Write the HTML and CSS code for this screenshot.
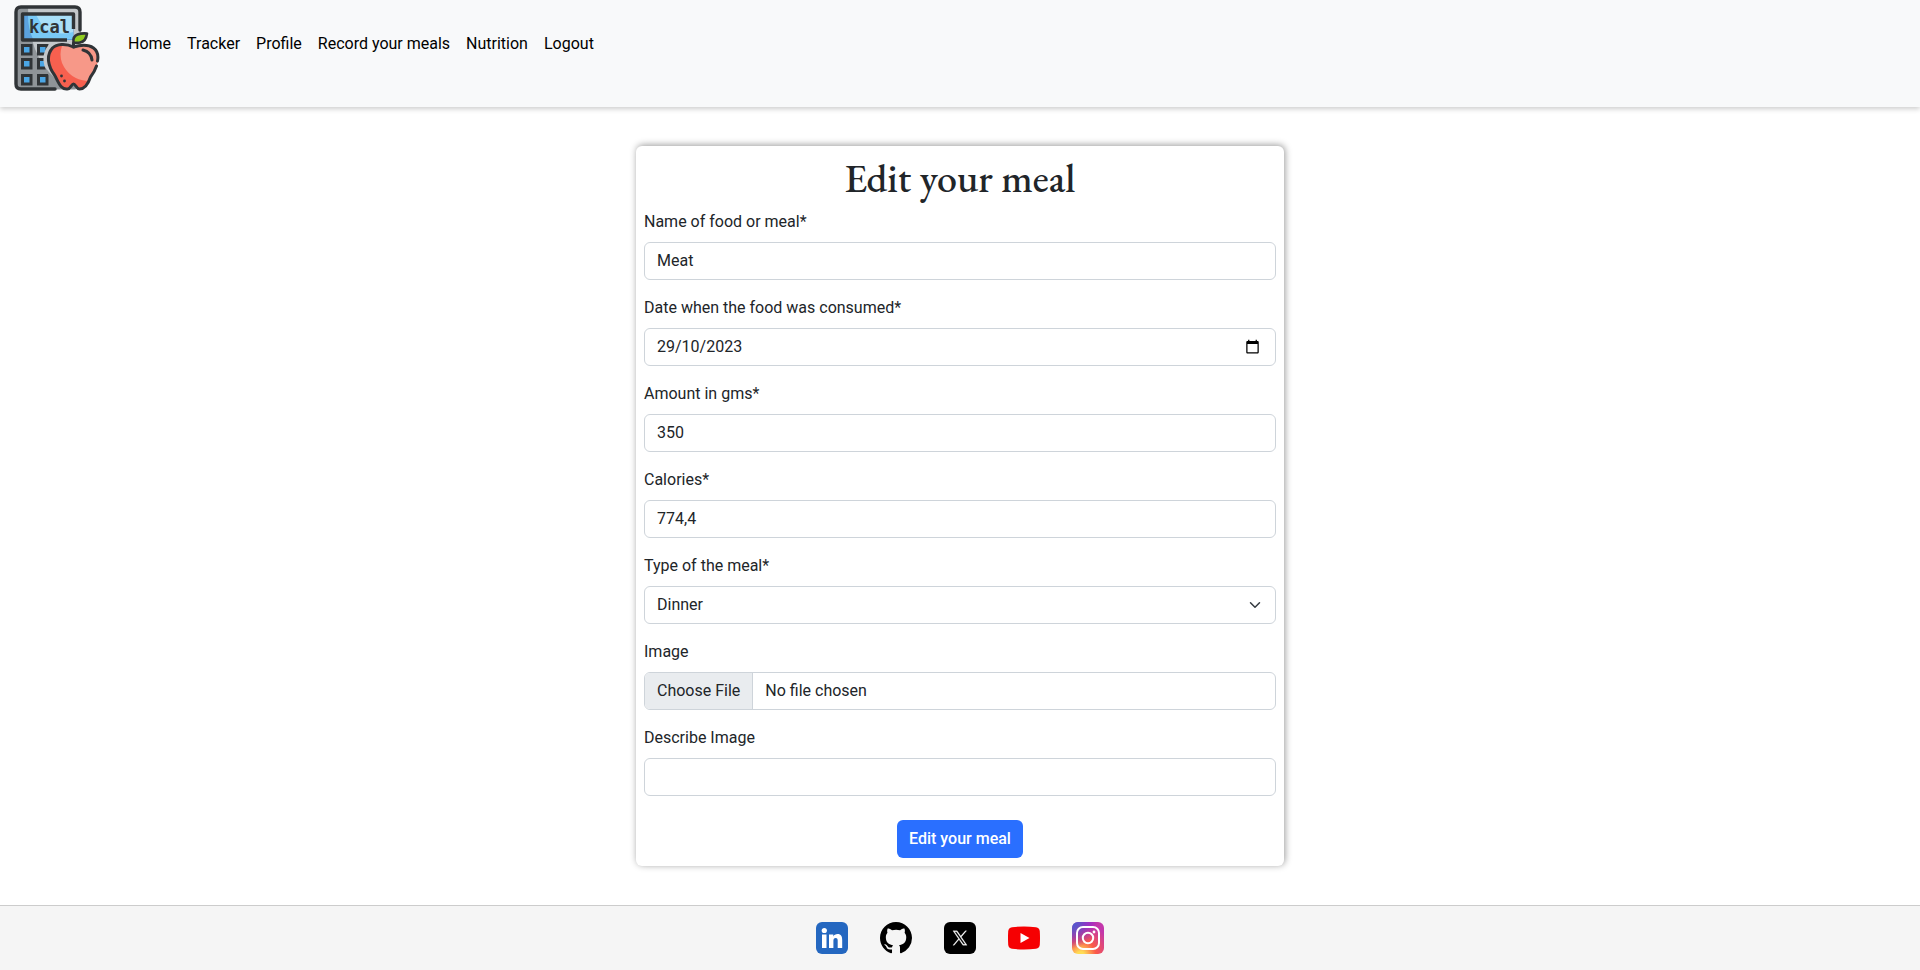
FILE: index.html
```html
<!DOCTYPE html>
<html lang="en">
<head>
<meta charset="utf-8">
<meta name="viewport" content="width=device-width, initial-scale=1">
<title>Edit your meal</title>
<link rel="stylesheet" href="styles.css">
</head>
<body>
<header class="navbar">
  <a class="brand" href="#" aria-label="kcal home">
    <svg class="logo" viewBox="0 0 86 86" fill="none" stroke-linecap="round" stroke-linejoin="round">
      <defs>
        <path id="apple" d="M59 42c-8-5-17-3-21 1-7 8-4 19 2 27 4 7 6 15 13 14 3 0 4-5 6-5s3 5 6 5c6 0 9-6 11-12 6-9 13-20 4-29-6-5-14-4-21-1Z"/>
        <mask id="around-apple" maskUnits="userSpaceOnUse" x="0" y="0" width="86" height="86">
          <path d="M0 0h86v86H0z" fill="#fff"/>
          <use href="#apple" fill="#000" stroke="#000" stroke-width="9"/>
        </mask>
      </defs>
      <rect x="1.500" y="1.500" width="65" height="83" rx="6" fill="#8f9498"/>
      <path d="M14 2h47q5 0 5 5v40L42 74Q14 50 14 2Z" fill="#c3c7ca"/>
      <path d="M66 25V7q0-5-5-5H7Q2 2 2 7v72q0 5 5 5h34" stroke="#303437" stroke-width="3.400"/>
      <rect x="8.500" y="9" width="51" height="26" fill="#5ba2df"/>
      <path d="M14 10h45v24H19q-5-10-5-24Z" fill="#79c9f6"/>
      <path d="M22 10h37v17Q46 31 31 25Z" fill="#a9dff8"/>
      <path d="M59.500 24V9H8.500v26H53" stroke="#303437" stroke-width="3.400" stroke-linecap="butt"/>
      <text class="logo-text" x="15" y="28">kcal</text>
      <g fill="#4ba6e5" stroke="#303437" stroke-width="3" stroke-linejoin="miter" mask="url(#around-apple)">
        <rect x="8.500" y="40.500" width="8.500" height="8.500"/><rect x="24.500" y="40.500" width="8.500" height="8.500"/>
        <rect x="8.500" y="54.500" width="8.500" height="8.500"/><rect x="24.500" y="54.500" width="8.500" height="8.500"/>
        <rect x="8.500" y="70.500" width="8.500" height="8.500"/><rect x="24.500" y="70.500" width="8.500" height="8.500"/>
      </g>
      <use href="#apple" fill="#f7604f"/>
      <path d="M59 42c7-3 15-4 21 1 8 8 2 19-4 29l-3 4Q55 74 48 58q-3-9 0-17 6-1 11 1Z" fill="#f79888"/>
      <path d="M83.500 56c1-5 0-10-4-13-6-4-13-3-20-1-8-4-17-3-21 1-7 8-4 19 2 27 4 7 6 15 13 14 3 0 4-5 6-5s3 5 6 5c6 0 9-6 11-12q4-5 6-11" stroke="#303437" stroke-width="3"/>
      <path d="M69 45q8 2 9 10" stroke="#303437" stroke-width="3"/>
      <path d="M59.500 42v-4" stroke="#303437" stroke-width="3"/>
      <path d="M59.500 37.500q-1-6 4-8 4-1.500 9.500-1-1 8-7 9-3 .5-6.500 0Z" fill="#91ce20" stroke="#303437" stroke-width="2.600"/>
      <circle cx="47.500" cy="71" r="1.400" fill="#303437"/><circle cx="50.500" cy="76" r="1.400" fill="#303437"/>
    </svg>
  </a>
  <nav class="nav-links" aria-label="Main">
    <a href="#">Home</a>
    <a href="#">Tracker</a>
    <a href="#">Profile</a>
    <a href="#">Record your meals</a>
    <a href="#">Nutrition</a>
    <a href="#">Logout</a>
  </nav>
</header>

<main class="container">
  <form class="card">
    <h1 class="title">Edit your meal</h1>
    <div class="field">
      <label for="name">Name of food or meal*</label>
      <input class="control" id="name" type="text" value="Meat" required>
    </div>
    <div class="field">
      <label for="date">Date when the food was consumed*</label>
      <div class="control-wrap">
        <input class="control" id="date" type="text" inputmode="numeric" value="29/10/2023" required>
        <svg class="control-icon" viewBox="0 0 24 24" fill="#000"><path d="M20 3h-1V1h-2v2H7V1H5v2H4c-1.100 0-2 .9-2 2v16c0 1.100.9 2 2 2h16c1.100 0 2-.9 2-2V5c0-1.100-.9-2-2-2zm0 18H4V8h16v13z"/></svg>
      </div>
    </div>
    <div class="field">
      <label for="amount">Amount in gms*</label>
      <input class="control" id="amount" type="text" inputmode="numeric" value="350" required>
    </div>
    <div class="field">
      <label for="calories">Calories*</label>
      <input class="control" id="calories" type="text" inputmode="decimal" value="774,4" required>
    </div>
    <div class="field">
      <label for="type">Type of the meal*</label>
      <div class="control-wrap">
        <select class="control" id="type"><option>Dinner</option></select>
        <svg class="control-icon chevron" viewBox="0 0 16 16" fill="none" stroke="#343a40" stroke-width="2" stroke-linecap="round" stroke-linejoin="round"><path d="m2 5 6 6 6-6"/></svg>
      </div>
    </div>
    <div class="field">
      <label for="image">Image</label>
      <input class="control file" id="image" type="file">
    </div>
    <div class="field">
      <label for="describe">Describe Image</label>
      <input class="control" id="describe" type="text">
    </div>
    <button class="submit" type="submit">Edit your meal</button>
  </form>
</main>

<footer class="footer">
  <a href="#" aria-label="LinkedIn">
    <svg viewBox="0 0 32 32"><rect width="32" height="32" rx="6" fill="#2467c0"/><g fill="#fff"><circle cx="8.300" cy="8.500" r="2.600"/><path d="M6 12.500h4.500V26H6zM13 12.500h4.300v1.900c.8-1.400 2.300-2.300 4.200-2.300 3.700 0 4.700 2.400 4.700 5.900v8h-4.500v-7.200c0-1.700-.4-2.900-2-2.900-1.700 0-2.300 1.200-2.300 2.900V26H13z"/></g></svg>
  </a>
  <a href="#" aria-label="GitHub">
    <svg viewBox="0 0 16 16"><path d="M8 0C3.580 0 0 3.580 0 8c0 3.540 2.290 6.530 5.470 7.590.4.070.55-.17.55-.38 0-.19-.01-.82-.01-1.490-2.010.37-2.530-.49-2.690-.94-.09-.23-.48-.94-.82-1.130-.28-.15-.68-.52-.01-.53.63-.01 1.080.58 1.230.82.720 1.210 1.870.87 2.330.66.070-.52.280-.87.510-1.070-1.780-.2-3.640-.89-3.640-3.950 0-.87.310-1.590.82-2.150-.08-.2-.36-1.020.08-2.120 0 0 .67-.21 2.200.82.640-.18 1.320-.27 2-.27s1.360.09 2 .27c1.530-1.040 2.200-.82 2.200-.82.440 1.100.16 1.920.08 2.120.51.560.82 1.270.82 2.150 0 3.070-1.870 3.750-3.650 3.950.29.250.54.730.54 1.480 0 1.070-.01 1.930-.01 2.200 0 .21.150.46.550.38A8.010 8.010 0 0 0 16 8c0-4.420-3.580-8-8-8z"/></svg>
  </a>
  <a href="#" aria-label="X">
    <svg viewBox="0 0 32 32"><rect width="32" height="32" rx="6"/><path transform="translate(8.800 8.800) scale(.6)" fill="#fff" stroke="#fff" stroke-width=".5" d="M14.234 10.162 22.977 0h-2.072l-7.591 8.824L7.251 0H.258l9.168 13.343L.258 24H2.330l8.016-9.318L16.749 24h6.993zm-2.837 3.299-.929-1.329L3.076 1.560h3.182l5.965 8.532.929 1.329 7.754 11.090h-3.182z"/></svg>
  </a>
  <a href="#" aria-label="YouTube">
    <svg viewBox="0 0 32 32"><path fill="#f60002" d="M4 5.200Q16 4 28 5.200q3.500.5 3.800 4 .4 7 0 13.600-.3 3.500-3.800 4Q16 28 4 26.800q-3.500-.5-3.800-4-.4-7 0-13.600.3-3.500 3.800-4Z"/><path d="M12.500 11v10l9-5z" fill="#fff"/></svg>
  </a>
  <a href="#" aria-label="Instagram">
    <svg viewBox="0 0 32 32"><defs><radialGradient id="warm" cx=".27" cy="1.050" r="1"><stop offset="0" stop-color="#fd5"/><stop offset=".12" stop-color="#fd5"/><stop offset=".48" stop-color="#fb5a48"/><stop offset="1" stop-color="#c337ab"/></radialGradient><radialGradient id="cool" cx="-.05" cy="-.02" r=".85"><stop offset="0" stop-color="#3566d8"/><stop offset=".4" stop-color="#5950cc" stop-opacity=".8"/><stop offset="1" stop-color="#60f" stop-opacity="0"/></radialGradient></defs><rect width="32" height="32" rx="6" fill="url(#warm)"/><rect width="32" height="32" rx="6" fill="url(#cool)"/><g fill="none" stroke="#fff" stroke-width="2"><rect x="5" y="5" width="22" height="22" rx="6"/><circle cx="16" cy="16" r="5.200"/></g><circle cx="22" cy="10" r="1.400" fill="#fff"/></svg>
  </a>
</footer>
</body>
</html>
```
FILE: styles.css
```css
*, *::before, *::after { box-sizing: border-box; }

body {
  margin: 0;
  min-height: 100vh;
  display: flex;
  flex-direction: column;
  background: #fff;
  color: #212529;
  font: 16px/24px Roboto, "Liberation Sans", sans-serif;
}

.navbar {
  display: flex;
  align-items: flex-start;
  gap: 28px;
  padding: 5px 14px 16px;
  background: #f8f9fa;
  box-shadow: 0 2px 5px rgba(0, 0, 0, 0.2);
}

.logo { display: block; width: 86px; height: 86px; }

.logo-text {
  font: bold 17px "DejaVu Sans Mono", monospace;
  fill: #303437;
}

.nav-links { display: flex; flex-wrap: wrap; gap: 16px; padding-top: 27px; }
.nav-links a { color: #000; text-decoration: none; }

.container {
  flex: 1;
  width: 100%;
  max-width: 1296px;
  margin: 0 auto;
  padding: 39px 0;
}

.card {
  width: 50%;
  min-width: 320px;
  margin: 0 auto;
  padding: 8px;
  border-radius: 6px;
  background: #fff;
  box-shadow: 1px -1px 7px rgba(0, 0, 0, 0.4);
}

.title {
  margin: 0 0 8px;
  font: 500 40px/48px "EB Garamond", "Liberation Serif", serif;
  text-align: center;
}

.field { margin-bottom: 16px; }
.field label { display: block; margin-bottom: 8px; }

.control {
  display: block;
  width: 100%;
  height: 38px;
  padding: 6px 12px;
  border: 1px solid #ced4da;
  border-radius: 6px;
  background: #fff;
  color: #212529;
  font: inherit;
  appearance: none;
}

.control[type="text"] { padding: 5px 12px 7px; }

.control-wrap { position: relative; }

.control-icon {
  position: absolute;
  top: 11px;
  right: 16px;
  width: 15px;
  height: 15px;
  pointer-events: none;
}

.chevron { top: 13px; right: 15px; width: 12px; height: 12px; }

.file { overflow: hidden; }

.file::file-selector-button {
  height: 38px;
  margin: -7px 12px -6px -12px;
  padding: 6px 12px;
  border: 0;
  border-right: 1px solid #ced4da;
  background: #e9ecef;
  color: #212529;
  font: inherit;
}

.submit {
  display: block;
  margin: 24px auto 0;
  padding: 7px 12px;
  border: 0;
  border-radius: 6px;
  background: #2a6fff;
  color: #fff;
  font: inherit;
  font-weight: 500;
}

.footer {
  display: flex;
  justify-content: center;
  gap: 32px;
  padding: 16px;
  border-top: 1px solid #ccc;
  background: #f5f5f5;
}

.footer svg { display: block; width: 32px; height: 32px; }
```
